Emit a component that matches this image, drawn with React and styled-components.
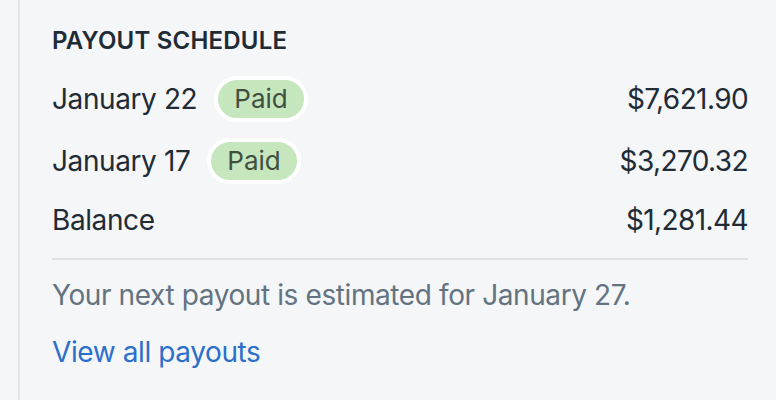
import React from 'react';
import styled, { createGlobalStyle } from 'styled-components';

const Global = createGlobalStyle`
  html, body {
    margin: 0;
    background: #f4f6f8;
  }
  body {
    font-family: Inter, "Noto Sans", "Liberation Sans", sans-serif;
    color: #212b36;
    -webkit-font-smoothing: antialiased;
  }
`

const Panel = styled.section`
  margin-left: 18px;
  border-left: 2px solid #e2e5e9;
  min-height: 400px;
  box-sizing: border-box;
  padding: 25px 28px 0 32px;
`

const Heading = styled.h2`
  margin: 0 0 19px;
  font-size: 24px;
  line-height: 32px;
  font-weight: 600;
  text-transform: uppercase;
  letter-spacing: 0.2px;
  color: #212b36;
`

const List = styled.div`
  display: flex;
  flex-direction: column;
  gap: 16px;
`

const Row = styled.div`
  display: flex;
  align-items: center;
  justify-content: space-between;
  min-height: ${p => (p.$tall ? '46px' : '40px')};
  font-size: 28px;
  line-height: 40px;
  letter-spacing: -0.4px;
`

const Label = styled.div`
  display: flex;
  align-items: center;
  gap: 17px;
`

const Badge = styled.span`
  display: inline-block;
  padding: 0 16px;
  border: 4px solid #fff;
  border-radius: 30px;
  background: #c6e6be;
  color: #414f3e;
  font-size: 26px;
  line-height: 38px;
  letter-spacing: 0;
`

const Amount = styled.span`
  letter-spacing: -0.6px;
`

const Divider = styled.hr`
  margin: 18px 0 15px;
  border: none;
  border-top: 2px solid #dfe3e8;
`

const Note = styled.p`
  margin: 0;
  font-size: 28px;
  line-height: 40px;
  letter-spacing: -0.4px;
  color: #637381;
`

const ViewLink = styled.a`
  display: inline-block;
  margin-top: 17px;
  font-size: 28px;
  line-height: 40px;
  letter-spacing: -0.4px;
  color: #2c6ecb;
  text-decoration: none;
`

const payouts = [
  { date: 'January 22', amount: '$7,621.90', status: 'Paid' },
  { date: 'January 17', amount: '$3,270.32', status: 'Paid' },
  { date: 'Balance', amount: '$1,281.44' },
];

export default function App() {
  return (
    <>
      <Global />
      <Panel>
        <Heading>Payout schedule</Heading>
        <List>
          {payouts.map(p => (
            <Row key={p.date} $tall={!!p.status}>
              <Label>
                {p.date}
                {p.status && <Badge>{p.status}</Badge>}
              </Label>
              <Amount>{p.amount}</Amount>
            </Row>
          ))}
        </List>
        <Divider />
        <Note>Your next payout is estimated for January 27.</Note>
        <ViewLink href="#">View all payouts</ViewLink>
      </Panel>
    </>
  );
}
